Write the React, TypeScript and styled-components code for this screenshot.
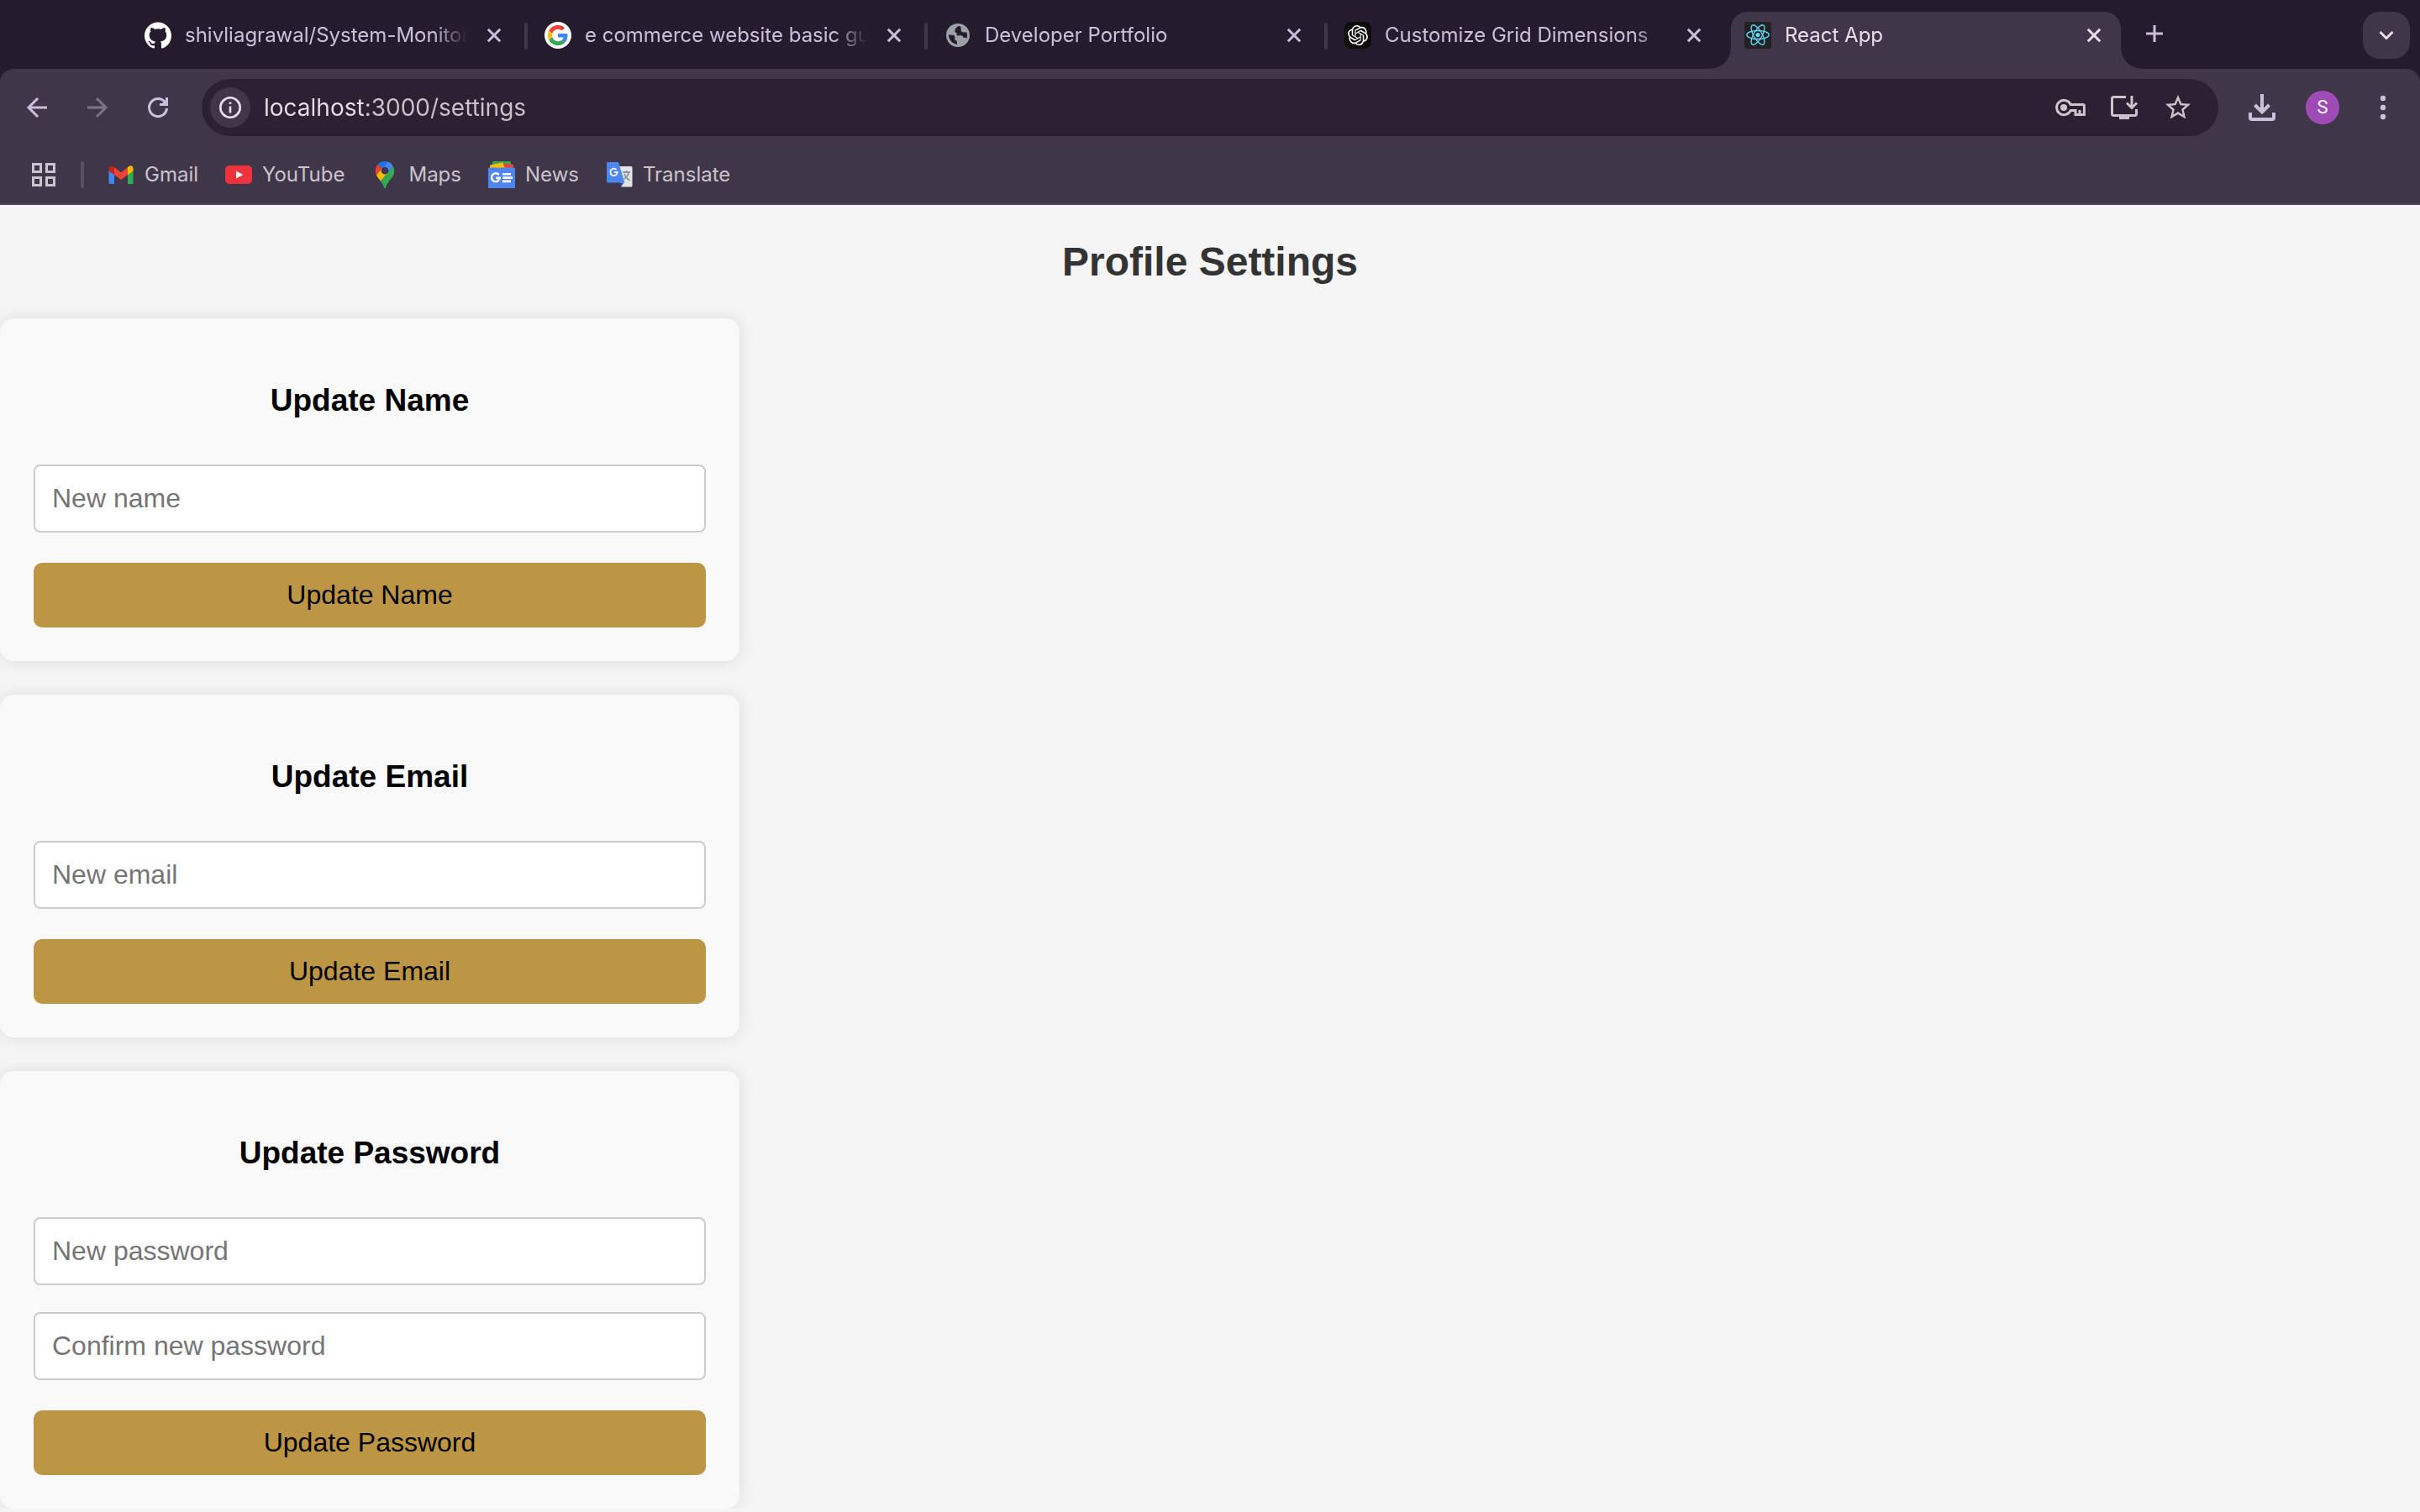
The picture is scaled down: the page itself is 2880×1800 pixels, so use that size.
import React from 'react';
import styled, { createGlobalStyle, css } from 'styled-components';
import { SiGithub, SiOpenai } from 'react-icons/si';

const GlobalStyle = createGlobalStyle`
  *, *::before, *::after { box-sizing: border-box; }
  body {
    margin: 0;
    background: #f5f5f5;
    font-family: "Liberation Sans", Arial, sans-serif;
  }
  button { font-family: inherit; cursor: pointer; }
`;

const color = {
  frame: '#241b2c',
  toolbar: '#40364a',
  field: '#2b2132',
  tabText: '#cbc0dc',
  bright: '#e9dfeb',
  muted: '#cac4cc',
  dim: '#7d7486',
  line: '#4a4650',
};

/* ---------- browser chrome ---------- */

const Chrome = styled.header`
  background: ${color.frame};
  font-family: Inter, Roboto, sans-serif;
  color: ${color.tabText};
`;

const TabStrip = styled.div`
  display: flex;
  align-items: flex-start;
  padding: 14px 12px 0 156px;
`;

const Tab = styled.div<{ $active?: boolean }>`
  position: relative;
  flex: 0 1 464px;
  min-width: 0;
  height: 68px;
  display: flex;
  align-items: center;
  gap: 16px;
  padding: 0 16px 12px;
  color: ${color.tabText};
  ${({ $active }) =>
    $active &&
    css`
      background: ${color.toolbar};
      border-radius: 20px 20px 0 0;
      color: ${color.bright};
      &::before,
      &::after {
        content: '';
        position: absolute;
        bottom: 0;
        width: 24px;
        height: 24px;
      }
      &::before {
        right: 100%;
        background: radial-gradient(circle at 0 0, transparent 23px, ${color.toolbar} 24px);
      }
      &::after {
        left: 100%;
        background: radial-gradient(circle at 100% 0, transparent 23px, ${color.toolbar} 24px);
      }
    `}
`;

const TabDivider = styled.span<{ $hidden?: boolean }>`
  flex: none;
  width: 4px;
  height: 32px;
  margin: 13px 4px 0;
  border-radius: 2px;
  background: ${({ $hidden }) => ($hidden ? 'transparent' : color.toolbar)};
`;

const TabTitle = styled.span`
  flex: 1;
  min-width: 0;
  overflow: hidden;
  white-space: nowrap;
  font-size: 24px;
  line-height: 32px;
  mask-image: linear-gradient(to right, #000 calc(100% - 40px), transparent);
`;

const Glyph = styled.svg<{ $size?: number }>`
  display: block;
  flex: none;
  width: ${({ $size = 32 }) => $size}px;
  height: ${({ $size = 32 }) => $size}px;
`;

const PlainButton = styled.button`
  flex: none;
  display: flex;
  align-items: center;
  justify-content: center;
  padding: 0;
  border: 0;
  background: none;
  color: inherit;
`;

const CloseButton = styled(PlainButton)`
  width: 32px;
  height: 32px;
`;

const NewTabButton = styled(PlainButton)`
  width: 56px;
  height: 52px;
  margin-left: 12px;
`;

const TabSearchButton = styled(PlainButton)`
  width: 56px;
  height: 56px;
  margin-left: auto;
  border-radius: 20px;
  background: ${color.toolbar};
  color: ${color.bright};
`;

const ToolbarArea = styled.div`
  background: ${color.toolbar};
  border-radius: 16px 16px 0 0;
  border-bottom: 2px solid ${color.line};
`;

const Toolbar = styled.div`
  display: flex;
  align-items: center;
  gap: 24px;
  padding: 12px 16px;
`;

const ToolGroup = styled.div`
  display: flex;
  align-items: center;
  gap: 16px;
`;

const ToolButton = styled(PlainButton)`
  width: 56px;
  height: 56px;
  &:disabled { color: ${color.dim}; }
`;

const Omnibox = styled.div`
  flex: 1;
  min-width: 0;
  height: 68px;
  display: flex;
  align-items: center;
  gap: 16px;
  padding: 0 24px 0 10px;
  border-radius: 34px;
  background: ${color.field};
  color: ${color.muted};
`;

const SiteInfo = styled(PlainButton)`
  width: 48px;
  height: 48px;
  border-radius: 50%;
  background: ${color.toolbar};
  color: ${color.bright};
`;

const AddressInput = styled.input`
  flex: 1;
  min-width: 0;
  padding: 0;
  border: 0;
  outline: 0;
  font-family: inherit;
  font-size: 28px;
  line-height: 40px;
  background: linear-gradient(to right, ${color.bright} 120px, ${color.muted} 120px);
  background-clip: text;
  -webkit-background-clip: text;
  -webkit-text-fill-color: transparent;
`;

const FieldButton = styled(PlainButton)`
  width: 48px;
  height: 48px;
`;

const Avatar = styled.span`
  display: flex;
  align-items: center;
  justify-content: center;
  width: 40px;
  height: 40px;
  border-radius: 50%;
  background: #9e4bb5;
  color: #fff;
  font-family: Roboto, sans-serif;
  font-size: 22px;
  line-height: 24px;
`;

const BookmarkBar = styled.nav`
  display: flex;
  align-items: center;
  height: 68px;
  padding: 0 28px;
`;

const AppsButton = styled(PlainButton)`
  width: 48px;
  height: 48px;
  color: ${color.muted};
`;

const BarDivider = styled.span`
  width: 4px;
  height: 32px;
  margin: 0 28px 0 20px;
  border-radius: 2px;
  background: #5a5064;
`;

const Bookmarks = styled.div`
  display: flex;
  gap: 32px;
`;

const Bookmark = styled.a`
  display: flex;
  align-items: center;
  gap: 12px;
  color: ${color.muted};
  font-size: 24px;
  line-height: 32px;
  text-decoration: none;
`;

/* ---------- icons ---------- */

const CloseIcon = () => (
  <Glyph viewBox="0 0 32 32" fill="none" stroke="currentColor" strokeWidth="3">
    <path d="M8.8 8.8 23.2 23.2M23.2 8.8 8.8 23.2" />
  </Glyph>
);
const PlusIcon = () => (
  <Glyph viewBox="0 0 32 32" fill="none" stroke="currentColor" strokeWidth="3">
    <path d="M16 6v20M6 16h20" />
  </Glyph>
);
const ChevronIcon = () => (
  <Glyph viewBox="0 0 32 32" fill="none" stroke="currentColor" strokeWidth="3">
    <path d="m8.5 12 7.5 7.5 7.5-7.5" />
  </Glyph>
);
const BackIcon = () => (
  <Glyph viewBox="0 0 32 32" fill="none" stroke="currentColor" strokeWidth="3">
    <path d="M28 16H6M17 5 6 16l11 11" />
  </Glyph>
);
const ForwardIcon = () => (
  <Glyph viewBox="0 0 32 32" fill="none" stroke="currentColor" strokeWidth="3">
    <path d="M4 16h22M15 5l11 11-11 11" />
  </Glyph>
);
const ReloadIcon = () => (
  <Glyph viewBox="0 0 32 32" fill="none" stroke="currentColor" strokeWidth="3">
    <path d="M26.5 17A10.5 10.5 0 1 1 24.5 9.9" />
    <path d="M26.5 4v8.5H18" />
    <path d="M25 7v4h-4z" fill="currentColor" stroke="none" />
  </Glyph>
);
const InfoIcon = () => (
  <Glyph viewBox="0 0 32 32" fill="none" stroke="currentColor" strokeWidth="2.6">
    <circle cx="16" cy="16" r="11.7" />
    <path d="M16 14.5v8M16 9.5v2.6" />
  </Glyph>
);
const KeyIcon = () => (
  <Glyph $size={40} viewBox="0 0 40 40" fill="none" stroke="currentColor" strokeWidth="3">
    <path d="M20.3 16.6A8.7 8.7 0 1 0 20.3 23.4H26v5.1h10.4V18.1a1.5 1.5 0 0 0-1.5-1.5z" />
    <circle cx="12" cy="20" r="4" fill="currentColor" stroke="none" />
    <path d="M31 23v5" />
  </Glyph>
);
const InstallIcon = () => (
  <Glyph $size={40} viewBox="0 0 40 40" fill="none" stroke="currentColor" strokeWidth="3">
    <path d="M22 7.500H7.500a2 2 0 0 0-2 2V27.500a2 2 0 0 0 2 2H32.500a2 2 0 0 0 2-2V22" />
    <path d="M14 31h12v3H14z" fill="currentColor" stroke="none" />
    <path d="M29 6v14M23 14.500l6 6 6-6" />
  </Glyph>
);
const StarIcon = () => (
  <Glyph $size={36} viewBox="0 0 24 24" fill="currentColor">
    <path d="m22 9.240-7.190-.62L12 2 9.190 8.630 2 9.240l5.460 4.730L5.820 21 12 17.270 18.180 21l-1.630-7.030L22 9.240zM12 15.400l-3.760 2.270 1-4.280-3.320-2.880 4.380-.38L12 6.100l1.710 4.040 4.380.38-3.320 2.880 1 4.280L12 15.400z" />
  </Glyph>
);
const DownloadIcon = () => (
  <Glyph viewBox="0 0 32 32" fill="none" stroke="currentColor" strokeWidth="4">
    <path d="M16 0v21M7.500 13l8.500 8.500 8.500-8.500" />
    <path d="M2 22v6a2 2 0 0 0 2 2h24a2 2 0 0 0 2-2v-6" />
  </Glyph>
);
const MenuIcon = () => (
  <Glyph viewBox="0 0 32 32" fill="currentColor">
    <circle cx="16" cy="5" r="3.200" />
    <circle cx="16" cy="16" r="3.200" />
    <circle cx="16" cy="27" r="3.200" />
  </Glyph>
);
const AppsIcon = () => (
  <Glyph viewBox="0 0 32 32" fill="none" stroke="currentColor" strokeWidth="3">
    <path d="M3.500 3.500h9v9h-9zM19.500 3.500h9v9h-9zM3.500 19.500h9v9h-9zM19.500 19.500h9v9h-9z" />
  </Glyph>
);
const GithubIcon = () => <SiGithub size={32} color="#fff" />;
const GoogleIcon = () => (
  <Glyph viewBox="0 0 64 64">
    <circle cx="32" cy="32" r="32" fill="#fff" />
    <g transform="translate(8 8)">
      <path fill="#EA4335" d="M24 9.500c3.540 0 6.710 1.220 9.210 3.600l6.850-6.850C35.900 2.380 30.470 0 24 0 14.620 0 6.510 5.380 2.560 13.220l7.980 6.190C12.430 13.720 17.740 9.500 24 9.500z" />
      <path fill="#4285F4" d="M46.980 24.550c0-1.570-.15-3.090-.38-4.550H24v9.020h12.940c-.58 2.960-2.260 5.480-4.780 7.180l7.730 6c4.510-4.180 7.090-10.360 7.090-17.650z" />
      <path fill="#FBBC05" d="M10.530 28.590c-.48-1.450-.76-2.990-.76-4.590s.27-3.140.76-4.590l-7.980-6.190C.92 16.460 0 20.120 0 24c0 3.880.92 7.540 2.560 10.780l7.970-6.190z" />
      <path fill="#34A853" d="M24 48c6.480 0 11.930-2.130 15.890-5.810l-7.730-6c-2.150 1.450-4.920 2.300-8.160 2.300-6.260 0-11.570-4.220-13.470-9.910l-7.980 6.190C6.510 42.620 14.620 48 24 48z" />
    </g>
  </Glyph>
);
const GlobeIcon = () => (
  <Glyph viewBox="0 0 32 32">
    <circle cx="16" cy="16" r="14" fill="#9aa0a6" />
    <path
      fill={color.frame}
      d="M17 5.100c-2.600 1.200-4.700 3.300-4.700 5.600 0 1.400 1 2.300 2.300 2.300v3.200h5.200c1.600 0 2.400 1 2.400 2.600h2.300c1 0 1.800.4 2 1.200.5-1.300.6-2.700.6-4 0-1.200-.3-2.500-.7-3.600h-3.700c-1.800 0-3-1.200-3-3V7.600C19.700 6.300 18.800 5.300 17 5.100zM5 15.600c0 5.800 4.300 10.600 10 11.300v-3c0-1.300-.7-2-2-2h-.6v-3.600c0-1.600-1-2.600-2.500-2.600z"
    />
  </Glyph>
);
const OpenAiBadge = styled.span`
  flex: none;
  display: flex;
  align-items: center;
  justify-content: center;
  width: 32px;
  height: 32px;
  border-radius: 8px;
  background: #0d0d0d;
  color: #fff;
`;
const OpenAiIcon = () => (
  <OpenAiBadge>
    <SiOpenai size={24} />
  </OpenAiBadge>
);
const ReactIcon = () => (
  <Glyph viewBox="0 0 32 32">
    <rect width="32" height="32" rx="3" fill="#222" />
    <g transform="translate(16 15.500)" fill="none" stroke="#61dafb" strokeWidth="1.300">
      <circle r="2.500" fill="#61dafb" stroke="none" />
      <ellipse rx="13.200" ry="5" />
      <ellipse rx="13.200" ry="5" transform="rotate(60)" />
      <ellipse rx="13.200" ry="5" transform="rotate(120)" />
    </g>
  </Glyph>
);
const GmailIcon = () => (
  <Glyph viewBox="0 0 32 32">
    <path fill="#4285f4" d="M1.500 11v14.800c0 .7.600 1.200 1.200 1.200H8V15.500z" />
    <path fill="#34a853" d="M24 15.500V27h5.300c.6 0 1.200-.5 1.200-1.200V11z" />
    <path fill="#fbbc04" d="M24 7.500v8.800l6.500-4.800V8.700c0-3-3.200-4.200-5.200-2.700z" />
    <path fill="#ea4335" d="M8 16V7l8 6.200L24 7v9l-8 6z" />
    <path fill="#c5221f" d="M1.500 8.700v2.800L8 16.300V7.300L6.700 6.200C4.700 4.600 1.500 5.700 1.500 8.700z" />
  </Glyph>
);
const YoutubeIcon = () => (
  <Glyph viewBox="0 0 32 32">
    <rect y="5" width="32" height="22" rx="5" fill="#ed333d" />
    <path fill="#fff" d="m13 11.500 8.200 4.500-8.200 4.500z" />
  </Glyph>
);
const MapsIcon = () => (
  <Glyph viewBox="0 0 92.300 132.300">
    <path fill="#1a73e8" d="M60.200 2.200C55.800.8 51 0 46.100 0 32 0 19.300 6.400 10.800 16.500l21.800 18.300L60.200 2.200z" />
    <path fill="#ea4335" d="M10.800 16.500C4.100 24.500 0 34.900 0 46.100c0 8.700 1.700 15.700 4.600 22l28-33.300-21.800-18.300z" />
    <path fill="#4285f4" d="M46.200 28.500c9.800 0 17.700 7.900 17.700 17.700 0 4.300-1.600 8.300-4.200 11.400 0 0 13.900-16.600 27.500-32.700-5.600-10.800-15.300-19-27-22.700L32.600 34.800c3.300-3.800 8.100-6.300 13.600-6.300" />
    <path fill="#fbbc04" d="M46.200 63.800c-9.800 0-17.700-7.900-17.700-17.700 0-4.300 1.500-8.300 4.100-11.300l-28 33.300c4.800 10.600 12.800 19.200 21 29.900l34.100-40.500c-3.300 3.900-8.100 6.300-13.500 6.300" />
    <path fill="#34a853" d="M59.100 109.200c15.400-24.100 33.300-35 33.300-63 0-7.700-1.900-14.900-5.200-21.300L25.600 98c2.600 3.400 5.300 7.300 7.900 11.300 9.400 14.500 6.800 23.100 12.800 23.100s3.400-8.700 12.800-23.200" />
  </Glyph>
);
const NewsIcon = () => (
  <Glyph viewBox="0 0 32 32">
    <path fill="#34a853" d="M6 0h20q1 0 1 1v8H5V1q0-1 1-1z" />
    <path fill="#ea4335" d="m18 2.500 11 1.200q1.500.3 1.200 1.500L29 10H17z" />
    <path fill="#fbbc04" d="M3 4.200 17.500 1.500 20 8.500H2V5.500q0-1 1-1.300z" />
    <path fill="#4f85ee" d="M1 7.500h30q1 0 1 1V31q0 1-1 1H1q-1 0-1-1V8.500q0-1 1-1z" />
    <path fill="none" stroke="#fff" strokeWidth="2.400" d="M12.800 16.200A4.900 4.900 0 1 0 13.800 19.700H9.200" />
    <path fill="#fff" d="M17 14h10v2.600H17zM17 18.300h12v2.600H17zM17 22.600h10v2.600H17z" />
  </Glyph>
);
const TranslateIcon = () => (
  <Glyph viewBox="0 0 32 32">
    <path fill="#e4e6e6" d="M12 6h18q1.500 0 1.500 1.500V29q0 1.500-1.500 1.500H18.500z" />
    <path fill="none" stroke="#8b9a9f" strokeWidth="1.800" d="M20 13h9M24.500 11v2M27.500 13c-1 4-3 6-5.500 8M22 15c1 3 3 5.500 6.500 8" />
    <path fill="#2a47b8" d="M16.500 25.500h5l-3.700 5z" />
    <path fill="#4f85ee" d="M2.500 1H15l7.500 24.500h-20Q1 25.500 1 24V2.500Q1 1 2.500 1z" />
    <path fill="none" stroke="#e8efff" strokeWidth="2" d="M12.700 10A4.200 4.200 0 1 0 13.800 13H9.700" />
  </Glyph>
);

/* ---------- settings page ---------- */

const Page = styled.main`
  display: flow-root;
`;

const PageTitle = styled.h1`
  margin: 40px 0;
  color: #333;
  font-size: 48px;
  line-height: 55px;
  text-align: center;
`;

const Cards = styled.div`
  display: flex;
  flex-direction: column;
  gap: 40px;
`;

const Card = styled.form`
  display: flex;
  flex-direction: column;
  width: 880px;
  max-width: 100%;
  padding: 40px;
  border-radius: 16px;
  background: #f9f9f9;
  box-shadow: 0 0 20px rgba(0, 0, 0, 0.1);
`;

const CardTitle = styled.h2`
  margin: 36px 0 38px;
  color: #000;
  font-size: 37px;
  line-height: 44px;
  text-align: center;
`;

const TextField = styled.input`
  width: 100%;
  height: 81px;
  margin: 16px 0;
  padding: 20px;
  border: 2px solid #ccc;
  border-radius: 8px;
  background: #fff;
  font-family: inherit;
  font-size: 32px;
  line-height: 37px;
  &::placeholder { color: #757575; }
`;

const SubmitButton = styled.button`
  width: 100%;
  margin-top: 20px;
  padding: 20px;
  border: 0;
  border-radius: 10px;
  background: #bc9644;
  color: #000;
  font-size: 32px;
  line-height: 37px;
`;

const tabs = [
  { title: 'shivliagrawal/System-Monitor', Icon: GithubIcon },
  { title: 'e commerce website basic gu', Icon: GoogleIcon },
  { title: 'Developer Portfolio', Icon: GlobeIcon },
  { title: 'Customize Grid Dimensions', Icon: OpenAiIcon },
  { title: 'React App', Icon: ReactIcon, active: true },
];

const bookmarks = [
  { name: 'Gmail', Icon: GmailIcon },
  { name: 'YouTube', Icon: YoutubeIcon },
  { name: 'Maps', Icon: MapsIcon },
  { name: 'News', Icon: NewsIcon },
  { name: 'Translate', Icon: TranslateIcon },
];

const forms = [
  { title: 'Update Name', fields: [{ type: 'text', label: 'New name' }] },
  { title: 'Update Email', fields: [{ type: 'email', label: 'New email' }] },
  {
    title: 'Update Password',
    fields: [
      { type: 'password', label: 'New password' },
      { type: 'password', label: 'Confirm new password' },
    ],
  },
];

export default function App() {
  return (
    <>
      <GlobalStyle />
      <Chrome>
        <TabStrip>
          {tabs.map(({ title, Icon, active }, i) => (
            <React.Fragment key={title}>
              {i > 0 && <TabDivider $hidden={active} />}
              <Tab $active={active}>
                <Icon />
                <TabTitle>{title}</TabTitle>
                <CloseButton type="button" aria-label="Close tab">
                  <CloseIcon />
                </CloseButton>
              </Tab>
            </React.Fragment>
          ))}
          <NewTabButton type="button" aria-label="New tab">
            <PlusIcon />
          </NewTabButton>
          <TabSearchButton type="button" aria-label="Search tabs">
            <ChevronIcon />
          </TabSearchButton>
        </TabStrip>

        <ToolbarArea>
          <Toolbar>
            <ToolGroup>
              <ToolButton type="button" aria-label="Back"><BackIcon /></ToolButton>
              <ToolButton type="button" aria-label="Forward" disabled><ForwardIcon /></ToolButton>
              <ToolButton type="button" aria-label="Reload"><ReloadIcon /></ToolButton>
            </ToolGroup>
            <Omnibox>
              <SiteInfo type="button" aria-label="Site information"><InfoIcon /></SiteInfo>
              <AddressInput aria-label="Address" defaultValue="localhost:3000/settings" spellCheck={false} />
              <FieldButton type="button" aria-label="Passwords"><KeyIcon /></FieldButton>
              <FieldButton type="button" aria-label="Install app"><InstallIcon /></FieldButton>
              <FieldButton type="button" aria-label="Bookmark this tab"><StarIcon /></FieldButton>
            </Omnibox>
            <ToolGroup>
              <ToolButton type="button" aria-label="Downloads"><DownloadIcon /></ToolButton>
              <ToolButton type="button" aria-label="Profile"><Avatar>S</Avatar></ToolButton>
              <ToolButton type="button" aria-label="Menu"><MenuIcon /></ToolButton>
            </ToolGroup>
          </Toolbar>
          <BookmarkBar aria-label="Bookmarks">
            <AppsButton type="button" aria-label="Apps"><AppsIcon /></AppsButton>
            <BarDivider />
            <Bookmarks>
              {bookmarks.map(({ name, Icon }) => (
                <Bookmark key={name} href="#">
                  <Icon />
                  {name}
                </Bookmark>
              ))}
            </Bookmarks>
          </BookmarkBar>
        </ToolbarArea>
      </Chrome>

      <Page>
        <PageTitle>Profile Settings</PageTitle>
        <Cards>
          {forms.map(({ title, fields }) => (
            <Card key={title} onSubmit={(e) => e.preventDefault()}>
              <CardTitle>{title}</CardTitle>
              {fields.map(({ type, label }) => (
                <TextField key={label} type={type} placeholder={label} aria-label={label} />
              ))}
              <SubmitButton type="submit">{title}</SubmitButton>
            </Card>
          ))}
        </Cards>
      </Page>
    </>
  );
}
